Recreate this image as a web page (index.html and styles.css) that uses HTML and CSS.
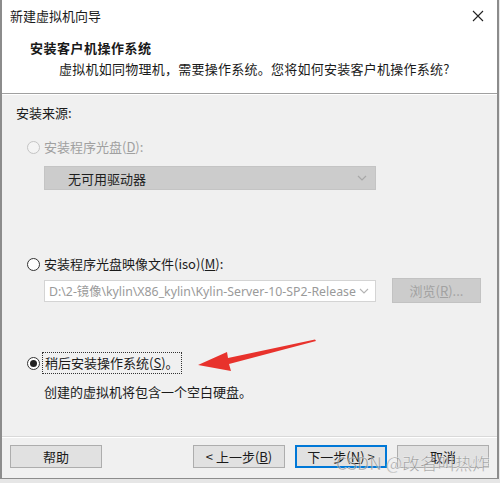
FILE: index.html
```html
<!DOCTYPE html>
<html>
<head>
<meta charset="utf-8">
<link rel="stylesheet" href="styles.css">
</head>
<body>
<div class="window">
  <div class="titlebar">
    <span class="title">新建虚拟机向导</span>
    <svg class="close" width="12" height="12" viewBox="0 0 12 12"><path d="M1 1L11 11M11 1L1 11" stroke="#222" stroke-width="1.1" fill="none"/></svg>
  </div>
  <div class="header">
    <div class="h-title">安装客户机操作系统</div>
    <div class="h-sub">虚拟机如同物理机，需要操作系统。您将如何安装客户机操作系统?</div>
  </div>
  <div class="body">
    <div class="section-label">安装来源:</div>
    <div class="option disabled opt1">
      <span class="radio"></span><span>安装程序光盘(<u>D</u>):</span>
    </div>
    <div class="combo disabled-combo">
      <span>无可用驱动器</span>
      <svg class="chev" width="10" height="6" viewBox="0 0 10 6"><path d="M1 1L5 5L9 1" stroke="#a8a8a8" stroke-width="1.2" fill="none"/></svg>
    </div>
    <div class="option opt2">
      <span class="radio"></span><span>安装程序光盘映像文件(iso)(<u>M</u>):</span>
    </div>
    <div class="iso-row">
      <div class="combo iso">
        <span class="iso-text">D:\2-镜像\kylin\X86_kylin\Kylin-Server-10-SP2-Release</span>
        <svg class="chev" width="10" height="6" viewBox="0 0 10 6"><path d="M1 1L5 5L9 1" stroke="#b4b4b4" stroke-width="1.1" fill="none"/></svg>
      </div>
      <div class="btn browse">浏览(<u>R</u>)...</div>
    </div>
    <div class="option opt3">
      <span class="radio checked"><span class="dot"></span></span><span class="focus">稍后安装操作系统(<u>S</u>)。</span>
    </div>
    <div class="desc">创建的虚拟机将包含一个空白硬盘。</div>
    <svg class="arrow" width="140" height="40" viewBox="0 0 140 40">
      <path d="M118 2 L117 0.5 L30 19 L29 13 L0 26 L33 32 L31 25 Z" fill="#e8322c"/>
    </svg>
  </div>
  <div class="footer">
    <div class="btn">帮助</div>
    <div class="spacer"></div>
    <div class="btn">&lt; 上一步(<u>B</u>)</div>
    <div class="btn primary">下一步(<u>N</u>) &gt;</div>
    <div class="btn">取消</div>
    <div class="watermark">CSDN @改名叫热炸</div>
  </div>
</div>
<div class="shadow"></div>
</body>
</html>
```
FILE: styles.css
```css
* { box-sizing: border-box; }
html, body { margin: 0; padding: 0; background: #e9e9e9; }
body {
  font-family: "Noto Sans CJK SC", "Microsoft YaHei", sans-serif;
  font-size: 13px;
  color: #1a1a1a;
  width: 500px;
  height: 483px;
  overflow: hidden;
}
.window {
  width: 499px;
  height: 479px;
  border-left: 2px solid #8c8c8c;
  border-right: 2px solid #8c8c8c;
  border-bottom: 1px solid #8c8c8c;
  background: #f0f0f0;
  display: flex;
  flex-direction: column;
  position: relative;
}
.titlebar {
  height: 32px;
  background: #fff;
  display: flex;
  align-items: center;
  justify-content: space-between;
  padding: 0 13px 0 8px;
}
.title { font-size: 13px; line-height: 16px; color: #1a1a1a; }
.close { display: block; }
.header {
  background: #fff;
  height: 62px;
  padding: 7px 0 0 28px;
  border-bottom: 1px solid #a0a0a0;
  box-shadow: 0 1px 0 #ffffff;
}
.h-title { font-weight: bold; font-size: 13px; line-height: 18px; letter-spacing: 0.5px; }
.h-sub { margin-left: 29px; margin-top: 3px; line-height: 18px; letter-spacing: 0.25px; }
.body {
  flex: 1;
  position: relative;
  padding: 10px 0 0 12px;
  border-bottom: 1px solid #d9d9d9;
}
.section-label { line-height: 18px; margin-left: 2px; }
.option { display: flex; align-items: center; gap: 4px; margin-left: 13px; line-height: 18px; }
.opt1 { margin-top: 16px; }
.opt2 { margin-top: 65px; }
.opt3 { margin-top: 51px; }
.disabled { color: #a0a0a0; }
.radio {
  width: 13px; height: 13px; border-radius: 50%;
  border: 1px solid #333; background: #fff;
  display: flex; align-items: center; justify-content: center;
  flex: none;
}
.disabled .radio { border-color: #c4c4c4; background: #f4f4f4; }
.dot { width: 7px; height: 7px; border-radius: 50%; background: #222; }
.focus { outline: 1px dotted #333; outline-offset: 1px; padding: 0 1px 0 1px; }
.combo {
  margin-left: 30px;
  display: flex; align-items: center; justify-content: space-between;
  height: 24px;
}
.disabled-combo {
  width: 332px;
  margin-top: 10px;
  background: #cccccc;
  border: 1px solid #c4c4c4;
  padding: 0 8px 0 23px;
  color: #1e1e1e;
}
.iso-row { display: flex; align-items: center; margin-top: 5px; }
.iso {
  width: 332px;
  height: 22px;
  background: #fff;
  border: 1px solid #d4d4d4;
  padding: 0 6px 0 4px;
  color: #9a9a9a;
  font-family: "Noto Sans", "Noto Sans CJK SC", sans-serif;
  white-space: nowrap;
  overflow: hidden;
}
.iso-text { font-size: 12.3px; }
.btn {
  width: 92px; height: 23px;
  border: 1px solid #adadad;
  background: #e1e1e1;
  display: flex; align-items: center; justify-content: center;
  flex: none;
}
.browse {
  margin-left: 16px; width: 89px; height: 25px;
  background: #cccccc; border-color: #c2c2c2; color: #a2a2a2;
}
.desc { margin: 11px 0 0 30px; line-height: 18px; }
.arrow { position: absolute; left: 196px; top: 245px; }
.footer {
  height: 41px;
  display: flex; align-items: center;
  padding: 0 8px 3px 8px;
  gap: 10px;
  position: relative;
  border-top: 1px solid #ffffff;
}
.spacer { flex: 1; }
.primary { border: 2px solid #0078d7; }
.watermark {
  position: absolute; left: 334px; top: 12px;
  font-size: 17.5px; line-height: 26px; color: rgba(110,110,110,0.6);
  font-family: "Noto Sans CJK SC", sans-serif;
  -webkit-text-stroke: 0.4px rgba(255,255,255,0.8);
  pointer-events: none;
  white-space: nowrap;
}
.shadow { height: 4px; background: #e6e6e6; }
```
